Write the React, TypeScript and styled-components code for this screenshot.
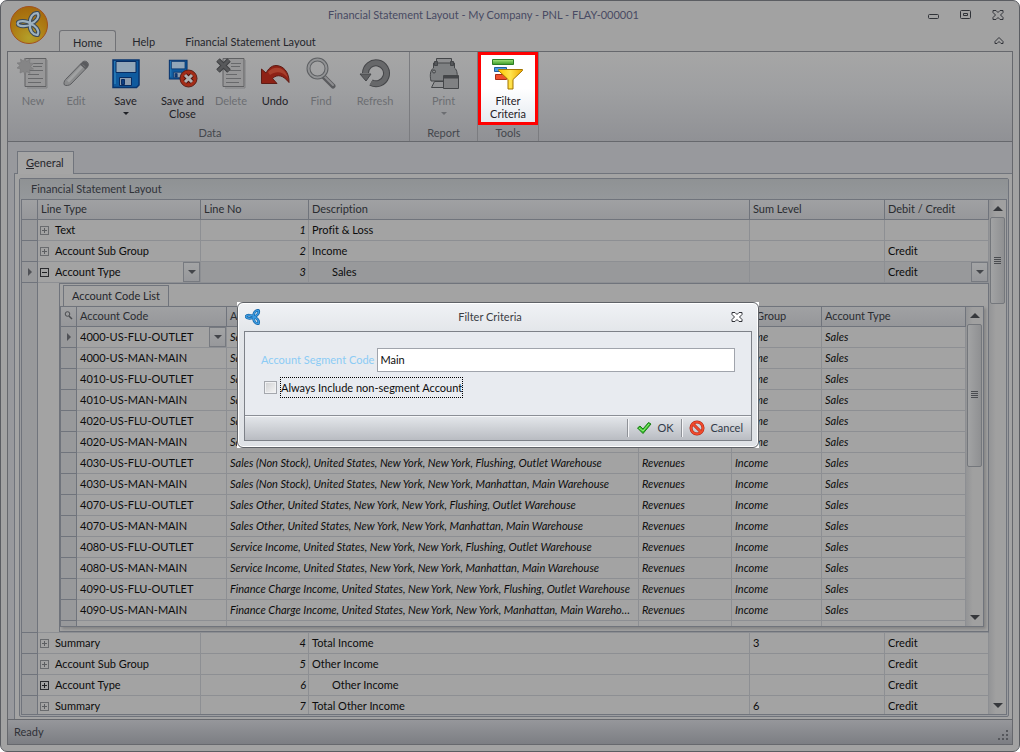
import React from 'react';
import styled, { createGlobalStyle, css } from 'styled-components';

const line = '#70747c';
const soft = '#8d8f93';

const Global = createGlobalStyle`
  *, *::before, *::after { box-sizing: border-box; }
  html, body, #root { height: 100%; }
  body { margin: 0; background: #fff; font-variant-ligatures: none; }
  body, button, input, select {
    font-family: Lato, "Liberation Sans", sans-serif;
    font-size: 11px;
    line-height: 14px;
    color: #0c0c0c;
  }
  button, input, select { margin: 0; padding: 0; border: 0; background: none; border-radius: 0; }
  table { font-size: 11px; }
  svg { display: block; flex: none; }
  h1, h2 { margin: 0; font-size: 11px; font-weight: 400; }
`;

const Window = styled.div`
  height: 100%;
  display: flex;
  flex-direction: column;
  padding: 0 6px 6px;
  background: #a2a2a2;
  border: 1px solid #5b5d62;
  border-radius: 7px;
  overflow: hidden;
`;

const TitleBar = styled.header`
  display: grid;
  grid-template-columns: 52px 1fr;
  height: 50px;
  flex: none;
`;

const AppButton = styled.button`
  width: 42px;
  height: 44px;
  padding: 4px 0 0 2px;
`;

const TitleRows = styled.div`
  display: flex;
  flex-direction: column;
  justify-content: space-between;
`;

const TitleLine = styled.div`
  display: flex;
  align-items: center;
  height: 27px;
  padding-right: 9px;
`;

const WindowTitle = styled.h1`
  flex: 1;
  text-align: center;
  color: #484a63;
  padding-right: 20px;
`;

const WindowButtons = styled.div`
  display: flex;
  gap: 20px;
`;

const IconButton = styled.button`
  display: grid;
  place-items: center;
  min-width: 12px;
  height: 12px;
`;

const TabLine = styled.nav`
  display: flex;
  align-items: center;
  padding-right: 8px;
`;

const RibbonTab = styled.button<{ $active?: boolean; $wide?: boolean }>`
  height: 21px;
  padding: 2px ${(p) => (p.$wide ? 14 : 13)}px 0;
  margin-right: 2px;
  color: #25262c;
  ${(p) =>
    p.$active &&
    css`
      border: 1px solid #717276;
      border-bottom: 0;
      border-radius: 3px 3px 0 0;
      background: #a6a6a6;
      margin-bottom: -1px;
      height: 22px;
    `}
`;

const Spacer = styled.div`
  flex: 1;
`;

const Body = styled.div`
  flex: 1;
  min-height: 0;
  display: flex;
  flex-direction: column;
  border: 1px solid #66686d;
  background: #98999d;
`;

const Ribbon = styled.div`
  display: flex;
  flex: none;
  height: 90px;
  background: linear-gradient(#a6a6a6, #9e9fa1 45%, #909195);
  border-bottom: 1px solid #66686d;
`;

const RibbonGroup = styled.section<{ $pad?: number }>`
  display: flex;
  flex-direction: column;
  padding: 0 ${(p) => (p.$pad ? 1 : 0)}px 0 ${(p) => p.$pad ?? 0}px;
  border-right: 1px solid #7b7c80;
`;

const GroupItems = styled.div`
  display: flex;
  flex: 1;
`;

const GroupLabel = styled.div`
  height: 15px;
  text-align: center;
  color: #44474d;
`;

const Tool = styled.button<{ $width: number; $marked?: boolean }>`
  width: ${(p) => p.$width}px;
  height: 73px;
  display: flex;
  flex-direction: column;
  align-items: center;
  line-height: 13px;
  padding-top: 5px;
  color: #1f2126;
  &:disabled { color: #6c6e72; }
  span { margin-top: 5px; }
  ${(p) =>
    p.$marked &&
    css`
      padding-top: 3px;
      border: 3px solid #f00;
      background: linear-gradient(#fff 50%, #e6ebf1);
      span { margin-top: 4px; }
    `}
`;

const Caret = styled.i`
  margin-top: 5px;
  border: 3px solid transparent;
  border-top-color: currentColor;
  border-bottom: 0;
`;

const Workspace = styled.main`
  flex: 1;
  min-height: 0;
  display: flex;
  flex-direction: column;
  padding: 9px 0 0 6px;
`;

const PageTab = styled.button`
  align-self: flex-start;
  height: 23px;
  margin: 0 0 -1px 3px;
  padding: 0 9px 0 8px;
  border: 1px solid ${line};
  border-bottom: 0;
  background: #a5a5a5;
  color: #25262c;
  position: relative;
  z-index: 1;
`;

const Page = styled.div`
  flex: 1;
  min-height: 0;
  display: flex;
  padding: 4px 3px 2px 4px;
  border: 1px solid ${line};
  border-right: 0;
  border-bottom: 0;
  background: #a3a3a3;
`;

const GroupBox = styled.section`
  flex: 1;
  min-width: 0;
  display: flex;
  flex-direction: column;
  padding: 0 1px 1px;
  border: 1px solid ${line};
  border-radius: 2px;
  background: #9b9c9f;
`;

const GroupTitle = styled.h2`
  flex: none;
  height: 20px;
  line-height: 20px;
  margin: 0 -1px;
  padding-left: 11px;
  color: #303238;
  background: linear-gradient(#8f9294, #95989b);
`;

const GridFrame = styled.div<{ $height?: number }>`
  ${(p) => (p.$height ? `height: ${p.$height}px;` : 'flex: 1;')}
  min-height: 0;
  display: flex;
  border: 1px solid ${line};
  background: #a3a3a3;
  ${(p) => p.$height && 'box-shadow: 2px 2px 3px rgba(0, 0, 0, 0.2);'}
`;

const GridView = styled.div`
  flex: 1;
  min-width: 0;
  overflow: hidden;
`;

const Grid = styled.table`
  width: 100%;
  table-layout: fixed;
  border-collapse: separate;
  border-spacing: 0;
`;

const Head = styled.th`
  height: 20px;
  padding: 0 3px 1px;
  text-align: left;
  font-weight: 400;
  color: #2a2c31;
  white-space: nowrap;
  overflow: hidden;
  background: linear-gradient(#a0a1a3, #96979a);
  border-right: 1px solid ${line};
  border-bottom: 1px solid ${line};
`;

const Cell = styled.td<{ $num?: boolean; $italic?: boolean; $indent?: boolean; $shade?: boolean }>`
  height: 21px;
  padding: 0 3px 0 ${(p) => (p.$indent ? 23 : 3)}px;
  border-right: 1px solid ${soft};
  border-bottom: 1px solid ${soft};
  white-space: nowrap;
  overflow: hidden;
  text-overflow: ellipsis;
  background: ${(p) => (p.$shade ? '#98999b' : '#a3a3a3')};
  ${(p) => p.$num && 'text-align: right; padding-right: 2px;'}
  ${(p) => p.$italic && 'font-style: italic;'}
`;

const Marker = styled.td`
  padding: 0 0 0 6px;
  border-right: 1px solid ${line};
  border-bottom: 1px solid ${line};
  background: #98999b;
`;

const Arrow = styled.i`
  display: block;
  width: 0;
  border: 4px solid transparent;
  border-left-color: #505257;
  border-right: 0;
`;

const TypeLine = styled.div`
  display: flex;
  align-items: center;
  gap: 6px;
  height: 20px;
  margin-left: -1px;
`;

const Toggle = styled.button<{ $strong?: boolean }>`
  flex: none;
  display: grid;
  place-items: center;
  width: 9px;
  height: 9px;
  border: 1px solid ${(p) => (p.$strong ? '#2a2b2e' : '#696b6e')};
  color: ${(p) => (p.$strong ? '#1f2022' : '#5c5e61')};
`;

const Picker = styled.div`
  position: relative;
  flex: 1;
  margin-right: -3px;
`;

const Select = styled.select`
  width: 100%;
  height: 20px;
  appearance: none;
`;

const PickerArrow = styled.span`
  position: absolute;
  inset: 0 0 0 auto;
  width: 17px;
  display: grid;
  place-items: center;
  border: 1px solid #777a80;
  background: linear-gradient(#a3a4a5, #97989b);
  pointer-events: none;
  color: #44464b;
`;

const Down = styled.i<{ $up?: boolean; $size?: number }>`
  width: 0;
  border: ${(p) => p.$size ?? 4}px solid transparent;
  ${(p) => (p.$up ? 'border-top: 0; border-bottom-color: currentColor;' : 'border-bottom: 0; border-top-color: currentColor;')}
`;

const DetailCell = styled.td`
  padding: 0 0 0 21px;
  background: #a3a3a3;
  border-right: 1px solid ${line};
  border-bottom: 1px solid ${soft};
`;

const Detail = styled.div`
  height: 349px;
  padding: 1px 4px 4px 0;
  border: 1px solid ${line};
  border-right: 0;
  display: flex;
  flex-direction: column;
`;

const DetailTab = styled.button`
  align-self: flex-start;
  height: 21px;
  margin-left: 3px;
  padding: 0 8px;
  border: 1px solid ${line};
  border-bottom: 0;
  color: #25262c;
`;

const ScrollTrack = styled.div`
  flex: none;
  width: 17px;
  display: flex;
  flex-direction: column;
  align-items: center;
  justify-content: space-between;
  padding: 0 1px;
  color: #3c3e42;
  background: linear-gradient(90deg, #939496, #a0a0a0 40%, #a0a0a0);
`;

const ScrollEnd = styled.button`
  width: 15px;
  height: 17px;
  flex: none;
  display: grid;
  place-items: center;
  color: #36383c;
`;

const Thumb = styled.div<{ $height: number }>`
  width: 15px;
  height: ${(p) => p.$height}px;
  flex: none;
  display: grid;
  place-items: center;
  border: 1px solid #74777c;
  border-radius: 2px;
  background: linear-gradient(90deg, #a2a3a4, #8f9092);
`;

const Grip = styled.i`
  width: 7px;
  height: 8px;
  background: repeating-linear-gradient(#4a4c50 0 1px, transparent 1px 2px);
`;

const StatusBar = styled.footer`
  flex: none;
  height: 25px;
  display: flex;
  align-items: center;
  justify-content: space-between;
  padding: 0 2px 0 6px;
  color: #303238;
  border-top: 1px solid #66686d;
  background: linear-gradient(#96979b, #7c7e83);
  svg { align-self: flex-end; margin-bottom: 2px; }
`;

const Backdrop = styled.div`
  position: fixed;
  inset: 0;
  display: grid;
  place-items: center;
  padding: 0 24px 3px 0;
`;

const DialogCorners = styled.div`
  width: 522px;
  max-width: 90%;
  background: #fff;
`;

const Dialog = styled.section`
  padding: 0 6px 6px;
  border: 1px solid #5f6267;
  border-radius: 6px;
  box-shadow: inset 0 0 0 1px #fff;
  background: linear-gradient(#f0f2f5, #e3e6ea 20%, #dfe2e6);
`;

const DialogTitle = styled.header`
  height: 28px;
  display: flex;
  align-items: center;
  padding: 0 9px 0 1px;
  h2 { flex: 1; text-align: center; color: #3a3d44; padding-right: 12px; }
`;

const DialogBody = styled.form`
  border: 1px solid #7d8188;
  background: #e8ebf0;
`;

const Fields = styled.div`
  padding: 16px;
  height: 83px;
`;

const Field = styled.label`
  display: flex;
  align-items: center;
  gap: 3px;
  color: #8ccbf5;
`;

const TextBox = styled.input`
  flex: 1;
  min-width: 0;
  height: 24px;
  padding: 0 2px;
  border: 1px solid #a0a4ac;
  background: #fff;
`;

const CheckLine = styled.label`
  display: flex;
  align-items: center;
  gap: 3px;
  margin: 5px 0 0 3px;
  span { border: 1px dotted #000; padding: 3px 0 2px; }
`;

const Check = styled.input`
  appearance: none;
  width: 13px;
  height: 13px;
  border: 1px solid #a4a7ad;
  background: linear-gradient(135deg, #cfd0d2, #f5f5f5);
  box-shadow: inset 0 0 0 1px #f0f1f3;
`;

const DialogActions = styled.div`
  height: 25px;
  display: flex;
  justify-content: flex-end;
  align-items: center;
  padding-right: 8px;
  border-top: 1px solid #8b8f96;
  background: linear-gradient(#e4e7eb, #b9bcc2);
  box-shadow: inset 0 1px #f6f7f9;
`;

const Action = styled.button`
  height: 18px;
  display: flex;
  align-items: center;
  gap: 5px;
  padding: 0 8px;
  color: #333b4a;
  border-left: 1px solid #8f9298;
  box-shadow: inset 1px 0 #f4f5f7;
  &:last-child { padding: 0 0 0 7px; }
`;

const Knot = ({ size, stroke, rim }: { size: number; stroke: string; rim: string }) => (
  <svg width={size} height={size} viewBox="0 0 24 24" fill="none" strokeLinecap="round">
    {[[rim, 4], [stroke, 2]].map(([c, w]) => (
      <g key={c} stroke={c as string} strokeWidth={w}>
        <path d="M14 12C10 8.500 2 8.500 1.500 11.500C2 14.500 10 15 14 12Z" />
        <path d="M13 12C12 6 16 1.500 20 2C22 5 19 10 13 12Z" />
        <path d="M13 12C18 13 22 18 20 22C16 22.500 12 18 13 12Z" />
      </g>
    ))}
  </svg>
);

const Logo = () => (
  <svg width="40" height="40" viewBox="0 0 40 40">
    <defs>
      <radialGradient id="gold" cx="50%" cy="85%" r="85%">
        <stop offset="0" stopColor="#b3a02a" />
        <stop offset=".6" stopColor="#ad7a12" />
        <stop offset="1" stopColor="#a3680c" />
      </radialGradient>
    </defs>
    <circle cx="20" cy="20" r="18.500" fill="url(#gold)" stroke="#a2501c" />
    <g transform="translate(7 6)"><Knot size={26} stroke="#9eb2c0" rim="#3c4956" /></g>
  </svg>
);

const Sheet = ({ x = 8 }: { x?: number }) => (
  <g>
    <path d={`M${x} 1.500h21v28h-21z`} fill="#979798" stroke="#606163" />
    <path d={`M${x + 22} 3v28H${x + 2}`} fill="none" stroke="#808183" />
    <path d={`M${x + 8} 6.500h10M${x + 8} 9.500h9M${x + 3} 13.500h15M${x + 3} 17.500h11M${x + 3} 21.500h15M${x + 3} 25.500h13`} stroke="#68696b" />
  </g>
);

const NewIcon = () => (
  <svg width="32" height="32" viewBox="0 0 32 32">
    <Sheet />
    <path d="M8 1l1.500 3.500L13 2l-.5 4 4 .5-3 3 3 2.500-4 .5.500 4-3.500-2L8 18l-1.500-3.500L3 16l.5-4L0 11l3-2.500L0 6l4-.5L3.500 2l3 2z" fill="#858586" stroke="#78797b" strokeWidth=".6" />
  </svg>
);

const EditIcon = () => (
  <svg width="32" height="32" viewBox="0 0 32 32">
    <path d="M5.500 22.500L22 5.500c3-3.500 8.500.5 5.500 4.500L11 27c-1.500 1.500-5.500 2-6.500 1s-.5-4 1-5.500z" fill="#8b8c8d" stroke="#5c5d60" />
    <path d="M7 23.500L21.500 8l2 2L9 25.500z" fill="#a0a1a2" />
    <path d="M20 7.500l5.500 5L27.500 10c2.500-3.500-2.500-7.500-5.500-4.500z" fill="#5a5b5e" />
    <path d="M22.500 7.500l3 2.500" stroke="#77787a" />
  </svg>
);

const Floppy = () => (
  <g>
    <path d="M2 2h26v25l-2.500 2.500H2z" fill="#0f5a9e" stroke="#08346e" strokeWidth="1.500" />
    <path d="M3 3h2v23H3z" fill="#2376b3" />
    <path d="M5 3.500h20v11H5z" fill="#92a6b8" stroke="#082c62" />
    <path d="M8.500 19.500h12v8h-12z" fill="#8c9cae" stroke="#082c62" />
    <path d="M10.500 21.500h3v5h-3z" fill="#0c3d80" stroke="#082c62" />
  </g>
);

const SaveIcon = () => <svg width="32" height="32" viewBox="0 0 32 32"><g transform="translate(1 1)"><Floppy /></g></svg>;

const SaveCloseIcon = () => (
  <svg width="32" height="32" viewBox="0 0 32 32">
    <g transform="translate(1 2) scale(.68)"><Floppy /></g>
    <circle cx="21.500" cy="21.500" r="8.500" fill="#a32c17" stroke="#5a1f17" />
    <path d="M18 18l7 7m0-7l-7 7" stroke="#4d1510" strokeWidth="5" />
    <path d="M18 18l7 7m0-7l-7 7" stroke="#b0b0b0" strokeWidth="3" />
  </svg>
);

const DeleteIcon = () => (
  <svg width="32" height="32" viewBox="0 0 32 32">
    <Sheet x={8} />
    <path d="M3 3l11 11M14 3L3 14" stroke="#3f4042" strokeWidth="5" />
    <path d="M3 3l11 11M14 3L3 14" stroke="#57585a" strokeWidth="3" />
  </svg>
);

const UndoIcon = () => (
  <svg width="32" height="32" viewBox="0 0 32 32">
    <path d="M2.500 12v14.500h15.500l-4.500-5c5-5 11-3 16.500 4C30.500 15 24 8.500 17 8.500c-5 0-8 4-10 7.500z" fill="#8e2216" stroke="#5e1c15" />
    <path d="M9 15c6-7 17-6 20 6-6-7-12-7-18-3z" fill="#a8402d" />
  </svg>
);

const FindIcon = () => (
  <svg width="32" height="32" viewBox="0 0 32 32" fill="none">
    <path d="M19 20l9 9" stroke="#5a5b5e" strokeWidth="5" strokeLinecap="round" />
    <path d="M20 20l8 8" stroke="#8c8d8f" strokeWidth="2" strokeLinecap="round" />
    <circle cx="12.500" cy="11.500" r="9" stroke="#5e6063" strokeWidth="4" />
    <circle cx="12.500" cy="11.500" r="9" stroke="#929395" strokeWidth="2" />
  </svg>
);

const RefreshIcon = () => (
  <svg width="32" height="32" viewBox="0 0 32 32" fill="none">
    <path d="M6.500 16A10.500 10.500 0 1 1 12 25.500" stroke="#454649" strokeWidth="7" />
    <path d="M6.500 16A10.500 10.500 0 1 1 12 25.500" stroke="#67686a" strokeWidth="5" />
    <path d="M1 17h11l-5 7z" fill="#606163" stroke="#454649" />
  </svg>
);

const PrintIcon = () => (
  <svg width="32" height="32" viewBox="0 0 32 32" stroke="#444649">
    <path d="M8.500 10V1.500h15V10" fill="#8d8e90" />
    <path d="M5.500 11v-5h21v5c3 2 3 7 2.500 13H3C1.500 18 2.500 13 5.500 11z" fill="#7e8082" />
    <path d="M6.500 4.500h3v4h-3zM22.500 4.500h3v4h-3z" fill="#545659" />
    <circle cx="6" cy="14.500" r="1.500" fill="#8a8b8d" />
    <path d="M6.500 24.500h10v6H3.500z" fill="#929395" />
    <path d="M15.500 18.500h15v13h-15z" fill="#808183" />
    <path d="M16 20h14" strokeWidth="3" />
  </svg>
);

const FilterIcon = () => (
  <svg width="32" height="32" viewBox="0 0 32 32">
    <defs>
      <linearGradient id="funnel" x1="0" x2="1"><stop offset="0" stopColor="#ffc400" /><stop offset=".5" stopColor="#ffe34d" /><stop offset="1" stopColor="#f0a800" /></linearGradient>
      <linearGradient id="green" x1="0" x2="0" y1="0" y2="1"><stop offset="0" stopColor="#a5e67c" /><stop offset="1" stopColor="#3a9b27" /></linearGradient>
    </defs>
    <path d="M.5 1.500h21v5H.5z" fill="url(#green)" stroke="#2d7d23" />
    <path d="M2.500 9.500h12v4h-12z" fill="#4a9be0" stroke="#225e9c" />
    <path d="M3.500 16.500h11v5h-11z" fill="#f0502c" stroke="#a82b13" />
    <path d="M6.500 11.500h24v1l-9.500 9v9.500h-5v-9.500l-9.500-9z" fill="url(#funnel)" stroke="#a17500" />
  </svg>
);

const Cross = ({ fill }: { fill: string }) => (
  <svg width="12" height="10" viewBox="0 0 12 10">
    <path d="M1 .5h3l2 2 2-2h3v2L8.500 5 11 7.500v2H8l-2-2-2 2H1v-2L3.500 5 1 2.500z" fill={fill} stroke="#303338" />
  </svg>
);

type ToolDef = { label: React.ReactNode; icon: React.ReactNode; width: number; off?: boolean; menu?: boolean };
const dataTools: ToolDef[] = [
  { label: 'New', icon: <NewIcon />, width: 42, off: true },
  { label: 'Edit', icon: <EditIcon />, width: 44, off: true },
  { label: 'Save', icon: <SaveIcon />, width: 55, menu: true },
  { label: <>Save and<br />Close</>, icon: <SaveCloseIcon />, width: 59 },
  { label: 'Delete', icon: <DeleteIcon />, width: 38, off: true },
  { label: 'Undo', icon: <UndoIcon />, width: 50 },
  { label: 'Find', icon: <FindIcon />, width: 42, off: true },
  { label: 'Refresh', icon: <RefreshIcon />, width: 66, off: true },
];

const place = 'United States, New York, New York, ';
const out = place + 'Flushing, Outlet Warehouse';
const man = place + 'Manhattan, Main Warehouse';
const accounts: [string, string][] = [
  ['4000-US-FLU-OUTLET', 'Sales, ' + out],
  ['4000-US-MAN-MAIN', 'Sales, ' + man],
  ['4010-US-FLU-OUTLET', 'Sales Discount, ' + out],
  ['4010-US-MAN-MAIN', 'Sales Discount, ' + man],
  ['4020-US-FLU-OUTLET', 'Sales Returns, ' + out],
  ['4020-US-MAN-MAIN', 'Sales Returns, ' + man],
  ['4030-US-FLU-OUTLET', 'Sales (Non Stock), ' + out],
  ['4030-US-MAN-MAIN', 'Sales (Non Stock), ' + man],
  ['4070-US-FLU-OUTLET', 'Sales Other, ' + out],
  ['4070-US-MAN-MAIN', 'Sales Other, ' + man],
  ['4080-US-FLU-OUTLET', 'Service Income, ' + out],
  ['4080-US-MAN-MAIN', 'Service Income, ' + man],
  ['4090-US-FLU-OUTLET', 'Finance Charge Income, ' + out],
  ['4090-US-MAN-MAIN', 'Finance Charge Income, ' + man],
];

type Line = { type: string; no: number; text: string; sum?: string; side?: string; indent?: boolean; strong?: boolean };
const before: Line[] = [
  { type: 'Text', no: 1, text: 'Profit & Loss' },
  { type: 'Account Sub Group', no: 2, text: 'Income', side: 'Credit' },
];
const after: Line[] = [
  { type: 'Summary', no: 4, text: 'Total Income', sum: '3', side: 'Credit' },
  { type: 'Account Sub Group', no: 5, text: 'Other Income', side: 'Credit' },
  { type: 'Account Type', no: 6, text: 'Other Income', side: 'Credit', indent: true, strong: true },
  { type: 'Summary', no: 7, text: 'Total Other Income', sum: '6', side: 'Credit' },
];

const ToolButton = ({ tool }: { tool: ToolDef }) => (
  <Tool $width={tool.width} disabled={tool.off}>
    {tool.icon}
    <span>{tool.label}</span>
    {tool.menu && <Caret />}
  </Tool>
);

const Expander = ({ strong, open }: { strong?: boolean; open?: boolean }) => (
  <Toggle $strong={strong} aria-label={open ? 'Collapse' : 'Expand'}>
    <svg width="5" height="5" viewBox="0 0 5 5" stroke="currentColor"><path d={open ? 'M0 2.500h5' : 'M0 2.500h5M2.500 0v5'} /></svg>
  </Toggle>
);

const Combo = ({ value, label }: { value: string; label: string }) => (
  <Picker>
    <Select aria-label={label} defaultValue={value}><option>{value}</option></Select>
    <PickerArrow><Down /></PickerArrow>
  </Picker>
);

const Scroll = ({ thumb }: { thumb: number }) => (
  <ScrollTrack>
    <div>
      <ScrollEnd aria-label="Scroll up"><Down $up $size={5} /></ScrollEnd>
      <Thumb $height={thumb}><Grip /></Thumb>
    </div>
    <ScrollEnd aria-label="Scroll down"><Down $size={5} /></ScrollEnd>
  </ScrollTrack>
);

const LineRow = ({ row }: { row: Line }) => (
  <tr>
    <Marker />
    <Cell><TypeLine><Expander strong={row.strong} />{row.type}</TypeLine></Cell>
    <Cell $num $italic>{row.no}</Cell>
    <Cell $indent={row.indent}>{row.text}</Cell>
    <Cell>{row.sum}</Cell>
    <Cell>{row.side}</Cell>
  </tr>
);

const AccountGrid = () => (
  <GridFrame $height={322}>
    <GridView>
      <Grid>
        <colgroup><col width="16" /><col width="150" /><col /><col width="93" /><col width="90" /><col width="144" /></colgroup>
        <thead>
          <tr>
            <Head aria-label="Search">
              <svg width="9" height="9" viewBox="0 0 9 9" fill="none" stroke="#4a4c50"><circle cx="3.500" cy="3" r="2.300" /><path d="M5 5l3 3" strokeWidth="1.500" /></svg>
            </Head>
            {['Account Code', 'Account Description', 'Account Group', 'Sub Group', 'Account Type'].map((h) => <Head key={h}>{h}</Head>)}
          </tr>
        </thead>
        <tbody>
          {accounts.map(([code, text], i) => (
            <tr key={code}>
              <Marker>{i === 0 && <Arrow />}</Marker>
              <Cell>{i === 0 ? <Combo value={code} label="Account Code" /> : code}</Cell>
              <Cell $italic>{text}</Cell>
              <Cell $italic>Revenues</Cell>
              <Cell $italic>Income</Cell>
              <Cell $italic>Sales</Cell>
            </tr>
          ))}
          <tr><Marker /><Cell /><Cell /><Cell /><Cell /><Cell /></tr>
        </tbody>
      </Grid>
    </GridView>
    <Scroll thumb={143} />
  </GridFrame>
);

const LayoutGrid = () => (
  <GridFrame>
    <GridView>
      <Grid>
        <colgroup><col width="16" /><col width="163" /><col width="108" /><col /><col width="135" /><col width="104" /></colgroup>
        <thead>
          <tr>
            <Head aria-label="Row" />
            {['Line Type', 'Line No', 'Description', 'Sum Level', 'Debit / Credit'].map((h) => <Head key={h}>{h}</Head>)}
          </tr>
        </thead>
        <tbody>
          {before.map((r) => <LineRow key={r.no} row={r} />)}
          <tr>
            <Marker><Arrow /></Marker>
            <Cell><TypeLine><Expander strong open /><Combo value="Account Type" label="Line Type" /></TypeLine></Cell>
            <Cell $num $italic $shade>3</Cell>
            <Cell $indent $shade>Sales</Cell>
            <Cell $shade />
            <Cell $shade><Combo value="Credit" label="Debit / Credit" /></Cell>
          </tr>
          <tr>
            <Marker />
            <DetailCell colSpan={5}>
              <Detail>
                <DetailTab>Account Code List</DetailTab>
                <AccountGrid />
              </Detail>
            </DetailCell>
          </tr>
          {after.map((r) => <LineRow key={r.no} row={r} />)}
        </tbody>
      </Grid>
    </GridView>
    <Scroll thumb={87} />
  </GridFrame>
);

const FilterDialog = () => (
  <Backdrop>
    <DialogCorners>
      <Dialog role="dialog" aria-labelledby="dialog-title">
        <DialogTitle>
          <Knot size={16} stroke="#3c9be0" rim="#1565a8" />
          <h2 id="dialog-title">Filter Criteria</h2>
          <IconButton aria-label="Close dialog"><Cross fill="#fff" /></IconButton>
        </DialogTitle>
        <DialogBody onSubmit={(e) => e.preventDefault()}>
          <Fields>
            <Field>Account Segment Code<TextBox defaultValue="Main" /></Field>
            <CheckLine><Check type="checkbox" /><span>Always Include non-segment Account</span></CheckLine>
          </Fields>
          <DialogActions>
            <Action type="submit">
              <svg width="16" height="14" viewBox="0 0 16 14"><path d="M1.500 7l2.500-2 3 3 5.500-6.500L15 3 7 12.500z" fill="#37c22c" stroke="#1b7a17" /><path d="M3 7l4 3 6-7" fill="none" stroke="#93ec7c" /></svg>
              OK
            </Action>
            <Action type="button">
              <svg width="16" height="16" viewBox="0 0 16 16" fill="none"><circle cx="8" cy="8" r="6" stroke="#a81f10" strokeWidth="3" /><path d="M4 4l8 8" stroke="#a81f10" strokeWidth="3" /><circle cx="8" cy="8" r="6" stroke="#f04a2c" strokeWidth="2" /><path d="M4 4l8 8" stroke="#f04a2c" strokeWidth="2" /></svg>
              Cancel
            </Action>
          </DialogActions>
        </DialogBody>
      </Dialog>
    </DialogCorners>
  </Backdrop>
);

export default function App() {
  return (
    <>
      <Global />
      <Window>
        <TitleBar>
          <AppButton aria-label="Application menu"><Logo /></AppButton>
          <TitleRows>
            <TitleLine>
              <WindowTitle>Financial Statement Layout - My Company - PNL - FLAY-000001</WindowTitle>
              <WindowButtons>
                <IconButton aria-label="Minimize"><svg width="12" height="10" viewBox="0 0 12 10"><rect x=".5" y="4.500" width="10" height="4" rx="1" fill="none" stroke="#303338" /></svg></IconButton>
                <IconButton aria-label="Maximize"><svg width="12" height="10" viewBox="0 0 12 10" fill="none" stroke="#303338"><rect x=".5" y=".5" width="10" height="8" rx="1" /><path d="M3.500 3.500h4v2h-4z" /></svg></IconButton>
                <IconButton aria-label="Close"><Cross fill="#a2a2a2" /></IconButton>
              </WindowButtons>
            </TitleLine>
            <TabLine>
              <RibbonTab $active>Home</RibbonTab>
              <RibbonTab $wide>Help</RibbonTab>
              <RibbonTab $wide>Financial Statement Layout</RibbonTab>
              <Spacer />
              <IconButton aria-label="Collapse ribbon"><svg width="10" height="8" viewBox="0 0 10 8"><path d="M5 .5L9 4.500v2H7L5 4.500l-2 2H1v-2z" fill="none" stroke="#303338" /></svg></IconButton>
            </TabLine>
          </TitleRows>
        </TitleBar>
        <Body>
          <Ribbon>
            <RibbonGroup $pad={4}>
              <GroupItems>{dataTools.map((t, i) => <ToolButton key={i} tool={t} />)}</GroupItems>
              <GroupLabel>Data</GroupLabel>
            </RibbonGroup>
            <RibbonGroup>
              <GroupItems><ToolButton tool={{ label: 'Print', icon: <PrintIcon />, width: 67, off: true, menu: true }} /></GroupItems>
              <GroupLabel>Report</GroupLabel>
            </RibbonGroup>
            <RibbonGroup>
              <GroupItems><Tool $width={60} $marked><FilterIcon /><span>Filter<br />Criteria</span></Tool></GroupItems>
              <GroupLabel>Tools</GroupLabel>
            </RibbonGroup>
          </Ribbon>
          <Workspace>
            <PageTab><u>G</u>eneral</PageTab>
            <Page>
              <GroupBox>
                <GroupTitle>Financial Statement Layout</GroupTitle>
                <LayoutGrid />
              </GroupBox>
            </Page>
          </Workspace>
          <StatusBar>
            Ready
            <svg width="12" height="12" viewBox="0 0 12 12" fill="#55575c"><path d="M8 0h2v2H8zM4 4h2v2H4zM8 4h2v2H8zM0 8h2v2H0zM4 8h2v2H4zM8 8h2v2H8z" /></svg>
          </StatusBar>
        </Body>
      </Window>
      <FilterDialog />
    </>
  );
}
